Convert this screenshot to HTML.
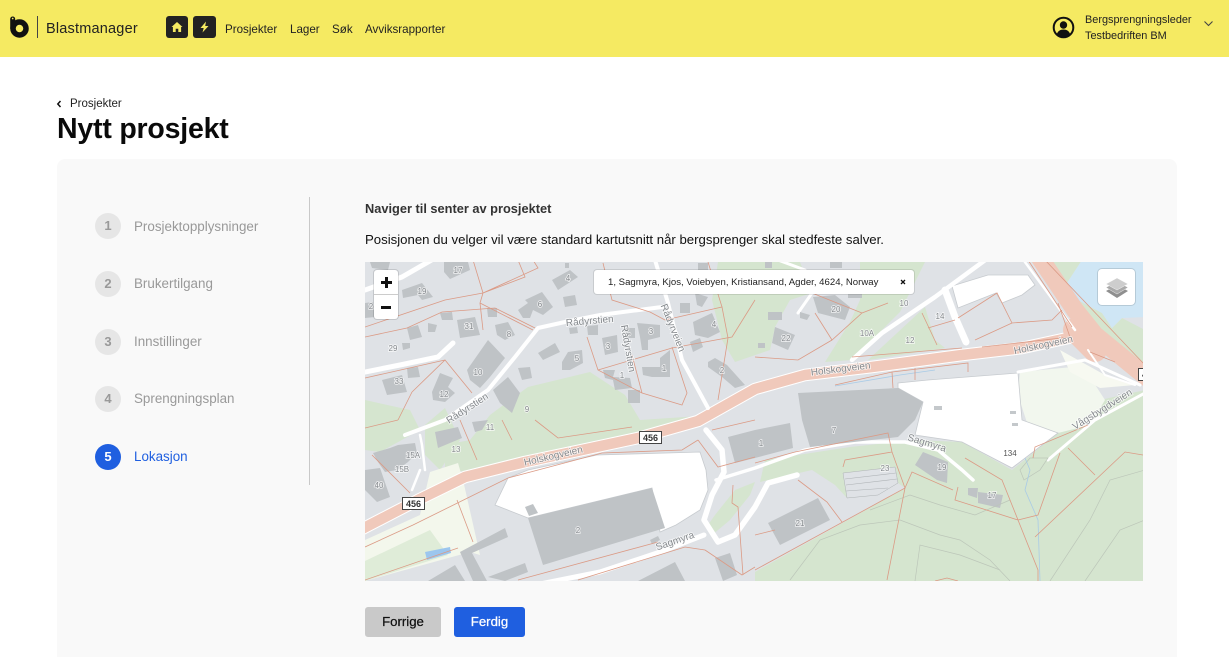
<!DOCTYPE html>
<html lang="no"><head><meta charset="utf-8"><title>Nytt prosjekt</title>
<style>
*{box-sizing:border-box}
html{margin:0;padding:0;width:1229px;height:657px;overflow:hidden;background:#fff}
body{margin:0;padding:0;width:1229px;height:657px;overflow:hidden;position:relative;background:#fff;font-family:"Liberation Sans",sans-serif;color:#111}
.abs{position:absolute;white-space:nowrap}
header{position:absolute;left:0;top:0;width:1229px;height:57px;background:#f5ea62}
.sq{position:absolute;top:16px;width:22px;height:22px;border-radius:3px;background:#222}
.nav{font-size:11.6px;top:23px;color:#222}
.card{position:absolute;left:57px;top:159px;width:1120px;height:520px;background:#f9f9f9;border-radius:8px}
.c{position:absolute;left:95px;width:26px;height:26px;border-radius:50%;background:#e6e6e6;color:#999;font-size:13px;font-weight:bold;text-align:center;line-height:26px}
.l{position:absolute;left:134px;font-size:13.4px;color:#999;white-space:nowrap}
.btn{position:absolute;top:607px;height:30px;border-radius:3px;font-size:13.2px;text-align:center;line-height:30px;-webkit-text-stroke:.25px currentColor}
svg text{font-family:"Liberation Sans",sans-serif;font-size:8px;fill:#85898d;stroke:#fff;stroke-width:1.6px;paint-order:stroke;stroke-opacity:.75;text-anchor:middle}
</style></head><body>
<header>
<svg class="abs" style="left:8px;top:14px" width="24" height="26" viewBox="0 0 24 26"><circle cx="11.500" cy="14.500" r="6.500" fill="none" stroke="#111" stroke-width="5.500"/><path d="M4.700 5V14" stroke="#111" stroke-width="5" stroke-linecap="round"/><circle cx="4.700" cy="4.500" r=".9" fill="#f5ea62"/></svg>
<div class="abs" style="left:37px;top:16px;width:1px;height:22px;background:#444"></div>
<div class="abs" style="left:46px;top:21px;font-size:14.500px;color:#222;letter-spacing:.2px">Blastmanager</div>
<div class="sq" style="left:166px"><svg width="22" height="22" viewBox="0 0 22 22"><path d="M5.500 11 11 6l5.500 5h-1.400v5h-2.800v-3.200H9.700V16H6.900v-5z" fill="#f5ea62"/></svg></div>
<div class="sq" style="left:193px;width:23px"><svg width="23" height="22" viewBox="0 0 23 22"><path d="M13 5.500 7.500 12h3.200L9.500 16.500 15.500 10h-3.300z" fill="#f5ea62"/></svg></div>
<div class="abs nav" style="left:225px">Prosjekter</div>
<div class="abs nav" style="left:290px">Lager</div>
<div class="abs nav" style="left:332px">Søk</div>
<div class="abs nav" style="left:365px">Avviksrapporter</div>
<svg class="abs" style="left:1052px;top:16px" width="23" height="23" viewBox="0 0 23 23"><circle cx="11.500" cy="11.500" r="9.800" fill="none" stroke="#111" stroke-width="2"/><circle cx="11.500" cy="9" r="3.700" fill="#111"/><path d="M4.800 18c1.200-3 3.500-4.500 6.700-4.500s5.500 1.500 6.700 4.500c-1.800 1.800-4.200 2.800-6.700 2.800s-4.900-1-6.700-2.800z" fill="#111"/></svg>
<div class="abs" style="left:1085px;top:14px;font-size:10.900px;color:#222">Bergsprengningsleder</div>
<div class="abs" style="left:1085px;top:30px;font-size:10.900px;color:#222">Testbedriften BM</div>
<svg class="abs" style="left:1203px;top:20px" width="11" height="8" viewBox="0 0 11 8"><path d="M1.500 1.500 5.500 5.500 9.500 1.500" fill="none" stroke="#444" stroke-width="1.100"/></svg>
</header>
<svg class="abs" style="left:56px;top:100px" width="7" height="8" viewBox="0 0 7 8"><path d="M4.500 1 1.800 4 4.500 7" fill="none" stroke="#111" stroke-width="1.500"/></svg>
<div class="abs" style="left:70px;top:98px;font-size:11.500px;color:#222">Prosjekter</div>
<div class="abs" style="left:57px;top:113px;font-size:28.500px;font-weight:bold;color:#0a0a0a;letter-spacing:-.2px">Nytt prosjekt</div>
<div class="card"></div>
<div class="abs" style="left:309px;top:197px;width:1px;height:288px;background:#c9c9c9"></div>
<div class="c" style="top:213px">1</div><div class="l" style="top:219px">Prosjektopplysninger</div>
<div class="c" style="top:271px">2</div><div class="l" style="top:276px">Brukertilgang</div>
<div class="c" style="top:329px">3</div><div class="l" style="top:334px">Innstillinger</div>
<div class="c" style="top:386px">4</div><div class="l" style="top:391px">Sprengningsplan</div>
<div class="c" style="top:444px;background:#1f5fe0;color:#fff">5</div><div class="l" style="top:449px;color:#1f5fe0">Lokasjon</div>
<div class="abs" style="left:365px;top:201px;font-size:12.800px;font-weight:bold;color:#333">Naviger til senter av prosjektet</div>
<div class="abs" style="left:365px;top:232px;font-size:13.200px;color:#111">Posisjonen du velger vil være standard kartutsnitt når bergsprenger skal stedfeste salver.</div>

<svg class="abs" style="left:365px;top:262px;filter:blur(.35px)" width="778" height="319" viewBox="365 262 778 319">
<rect x="365" y="262" width="778" height="319" fill="#dfe2e6"/>
<g fill="#d5e5cf">
<path d="M718 262H800L812 293 790 300 775 327 770 350 735 362 722 340 712 300z"/>
<path d="M860 262H925L900 312 880 332 852 360 825 362 850 322 860 300z"/>
<path d="M868 360 925 307 935 340 945 348z"/>
<path d="M1045 260H1082L1067 283 1072 297 1102 313 1112 328 1122 318 1145 330V368L1100 333z"/>
<path d="M528 387 590 372 625 395 640 420 700 416 640 434 525 458 470 473 445 468 445 445 470 440 490 415 510 400z"/>
<path d="M365 400 410 410 420 430 380 452 365 450z"/>
<path d="M425 425 445 408 460 440 440 470 425 455z"/>
<path d="M755 581V572L905 488 898 483 878 495 847 498 835 485 812 470 760 482 765 460 850 447 915 440 962 442 1012 470 1058 433 1100 400 1145 390V581z"/>
<path d="M715 515 735 490 755 482 750 495 730 520 712 535 708 525z"/>
</g>
<path d="M1082 260H1145V317L1122 318 1112 328 1102 313 1072 297 1067 283z" fill="#cfe6f5"/>
<path d="M430 472 458 463 463 480 480 555 470 552 365 581V540L420 515z" fill="#f3f7ec"/>
<path d="M365 561 430 530 448 555 365 581z" fill="#dfecd8"/>
<path d="M425 552 450 547 451 553 427 560z" fill="#9cc6ee"/>
<path d="M1020 372 1083 366 1105 400 1090 425 1058 433 1030 432 1018 395z" fill="#f2f7ee"/>
<path d="M1060 350 1105 375 1135 385 1100 388 1070 372z" fill="#f7f9f1"/>
<g fill="#fff" stroke="#c7cbcf" stroke-width=".8">
<path d="M508 478 528 470 597 455 700 452 706 470 708 490 700 510 676 525 660 532 652 488 528 518 495 505z"/>
<path d="M898 383 928 380 1018 373 1022 420 1058 433 1012 468 962 442 915 435 923 402 898 388z"/>
<path d="M952 286 988 275 1028 275 1035 285 1022 295 1002 303 996 293 958 308z"/>
</g>
<path d="M700 420 708 408 760 392 795 378 1018 372 1016 354 872 368 805 377z" fill="#dfe2e6"/>
<g fill="none" stroke-linecap="round" stroke-linejoin="round">
<path d="M360 530 418 500 465 477 525 462 582 450 638 438 698 421 755 389 805 375 872 367 962 355 1022 348 1082 335" stroke="#fff" stroke-width="12.500"/>
<path d="M1040 258 1075 310 1095 335 1150 380" stroke="#f0c9bb" stroke-width="18"/>
<path d="M360 530 418 500 465 477 525 462 582 450 638 438 698 421 755 389 805 375 872 367 962 355 1022 348 1082 335" stroke="#f0c9bb" stroke-width="10.500"/>
<path d="M1075 330 1095 350" stroke="#f0c9bb" stroke-width="24"/>
<g stroke="#fff">
<path d="M662 307 600 315 565 322 538 328 515 357 488 390 445 420 405 435" stroke-width="4"/>
<path d="M453 343 438 357 400 365 365 372" stroke-width="5"/>
<path d="M365 290 402 277 435 258" stroke-width="5"/>
<path d="M655 260 668 303 682 360 708 408" stroke-width="4"/>
<path d="M706 430 722 450 724 472 712 495 704 520 718 542 735 535 755 507 768 483 797 475" stroke-width="5.500"/>
<path d="M535 585 600 572 660 552 704 535" stroke-width="5"/>
<path d="M716 480 755 468 805 450 855 442 905 442 938 450 962 470 973 480" stroke-width="3.500"/>
<path d="M852 360 882 333 935 297 988 258" stroke-width="4.500"/>
<path d="M945 290 955 317 966 342" stroke-width="7"/>
<path d="M1022 258 1075 330" stroke-width="2.500"/>
<path d="M798 313 812 293" stroke-width="3"/>
<path d="M778 260 805 270" stroke-width="3"/>
<path d="M1145 393 1095 420 1048 460" stroke-width="3"/>
<path d="M1018 372 1085 360 1140 385" stroke-width="3"/>
<path d="M1088 350 1105 375 1135 385" stroke-width="2"/>
<path d="M425 470 422 445 420 435M420 470 412 490" stroke-width="2.500"/>
</g>
</g>
<g fill="#bfc3c6">
<path d="M444 262H468L470 270 450 279 444 272zM402 290 422 283 433 297 422 300 418 295 403 298zM370 262H390L388 270 372 268zM365 303 373 302 375 317 365 318zM552 280 570 270 578 277 558 290zM565 263H569V268H565zM518 310 528 303 525 300 542 292 553 307 543 315 533 310 530 318 523 318zM563 297 575 295 577 305 565 307zM457 320 475 317 480 335 460 338zM440 313 452 312 453 320 442 320zM407 328 418 325 422 337 410 340zM428 323 437 325 435 332 428 332zM495 325 508 322 515 335 505 340 497 335zM487 308H497V317H488zM402 343H410V348L403 350zM382 380 402 375 407 392 387 395zM407 368 418 367 420 377 408 378zM467 370 488 340 505 358 490 377 480 388 470 380zM432 392 440 373 453 378 448 387 455 393 445 402 433 400zM493 390 508 377 520 393 512 413 500 403zM518 368 530 367 532 378 522 380zM562 362 568 352 582 350 583 363 570 370 562 370zM538 353 555 343 560 352 543 360zM602 338 617 335 618 352 605 355zM637 323 660 325V337L648 340V350H642L640 337zM625 328H635V338H625zM587 326 598 325V335H588zM569 328 577 327 578 333 570 334zM603 370H615L613 377 630 378 632 388 615 390 613 380 605 378zM642 367H660V358L670 350V377H652L643 375zM628 390H640V403H628zM693 322 712 313 720 332 708 338 695 335zM680 303H690V313H680zM690 342 700 338 703 347 693 352zM695 293 708 297 702 307 697 305zM708 362 715 358 727 365 745 385 735 388 722 377 708 367zM698 263H708V270H698z"/>
<path d="M813 297 835 295 850 307 845 320 818 313zM775 327 795 335 788 350 772 343zM768 312H782V320H768zM800 312 810 315 807 320 800 318zM848 293H862V298H848zM758 343H765V348H758zM765 262H772V268H765zM830 262H842V268H830z"/>
<path d="M435 432 458 427 462 438 438 448zM472 422 488 420 482 430 475 432zM373 453 390 448 398 445 415 443 417 453 408 462 397 470 385 472 378 462zM365 470 380 468 390 497 377 502 365 490zM528 518 652 488 665 528 543 565zM525 507 533 504 538 513 529 516zM460 552 505 528 508 537 472 553 487 581H473zM488 577 525 563 528 572 505 581zM428 581 455 565 465 581zM638 581 675 562 685 581zM715 558 730 553 737 575 723 581zM728 437 755 430 790 423 793 448 755 458 735 463zM798 393 898 388 923 402 915 420 898 437 810 447 802 420zM768 523 818 498 830 520 780 545zM915 465 923 452 948 462 947 483 937 480zM978 492 1003 495 1000 508 978 503zM968 488H978L977 498 968 495zM612 535 625 531 628 537 615 542zM650 540 658 536 660 540 652 544z"/>
</g>
<path d="M843 473 895 467 898 483 878 495 847 498z" fill="#dfe2e6" stroke="#aeb2b5" stroke-width=".5"/>
<path d="M845 479 896 473M846 485 897 479M846 491 888 488" stroke="#aeb2b5" stroke-width=".6" fill="none"/>
<path d="M1010 411H1016V414H1010zM934 406H942V410H934zM1012 423H1018V426H1012z" fill="#c4c8cb"/>
<g fill="none" stroke="#bcc6b9" stroke-width=".7">
<path d="M790 580 820 540 860 525 900 520 940 535 960 540 990 560 1010 581"/>
<path d="M915 581 920 545 960 555 1000 570"/>
<path d="M1050 581 1090 520 1110 480 1145 470"/>
<path d="M1085 581 1120 530 1145 520"/>
<path d="M1020 470 1030 458 1048 458 1040 470 1024 480z"/>
<path d="M870 510 910 495 940 505 975 515 1010 500"/>
</g>
<path d="M1025 458 1030 470 1025 490 1038 520 1040 581" fill="none" stroke="#a9cbe6" stroke-width=".8"/>
<path d="M835 386 900 375 935 370" fill="none" stroke="#a9cbe6" stroke-width=".8"/>
<g fill="none" stroke="#db9a85" stroke-width=".8">
<path d="M365 327 445 300 483 293 538 268 533 260M483 293 473 260M483 293 480 303 483 330M480 303 533 330M365 337 407 328 442 312 495 308 535 328M412 392 445 360 472 393M365 378 445 360M398 420 412 392M518 260 525 277 483 293"/>
<path d="M587 337 598 370 642 393 682 405 687 393 672 347M598 370 672 348 732 337 755 300M632 355 642 393M665 320 722 307 728 338 718 400M722 307 708 262M603 263 612 300 650 312 665 320"/>
<path d="M755 357 798 360 832 340 862 313 888 303M812 293 862 313M832 340 815 313M852 357 962 348M922 313 937 345M928 328 955 320M958 318 997 293 1012 323 1052 320 1062 310M975 340 1012 323M982 347 1070 337 1058 303"/>
<path d="M835 385 892 372 968 363 968 372M892 372 893 388M915 368 915 380"/>
<path d="M1045 260 1145 365M1028 260 1072 327M1090 352 1115 362"/>
<path d="M365 547 413 525 508 478 602 453 682 450 698 440M457 500 473 542M365 580 458 548M518 580 658 542M372 455 410 493M365 428 398 420M460 420 477 460M502 420 512 440M535 420 558 438 632 427M712 430 755 420M698 440 718 467 755 457M733 485 732 503 738 507 743 575M705 550 742 575 755 567M578 580 685 547 705 550"/>
<path d="M755 535 775 530M755 570 905 488 887 580M905 488 912 472 953 490M892 452 845 460 843 467M892 452 905 488M798 480 827 502 842 522M755 463 795 452 888 433 892 452M965 458 1002 480 1018 520 955 500 958 487M1018 520 1038 515 1060 453M1035 537 1125 452 1143 455M1095 475 1068 448M1018 520 1038 570 1038 581M1033 458 1035 447 1088 425M935 581 947 578 958 581"/>
</g>
<text x="590" y="324" style="font-size:10px" transform="rotate(-5 590 324)">Rådyrstien</text>
<text x="625" y="349" style="font-size:10px" transform="rotate(80 625 349)">Rådyrstien</text>
<text x="670" y="329" style="font-size:10px" transform="rotate(68 670 329)">Rådyrveien</text>
<text x="469" y="411" style="font-size:10px" transform="rotate(-33 469 411)">Rådyrstien</text>
<text x="841" y="372" style="font-size:10px" transform="rotate(-7 841 372)">Holskogveien</text>
<text x="1044" y="348" style="font-size:10px" transform="rotate(-12 1044 348)">Holskogveien</text>
<text x="554" y="459" style="font-size:10px" transform="rotate(-13 554 459)">Holskogveien</text>
<text x="676" y="544" style="font-size:10px" transform="rotate(-19 676 544)">Sagmyra</text>
<text x="926" y="446" style="font-size:10px" transform="rotate(17 926 446)">Sagmyra</text>
<text x="1104" y="412" style="font-size:10px" transform="rotate(-32 1104 412)">Vågsbygdveien</text>
<g>
<text x="458" y="273">17</text><text x="422" y="294">19</text><text x="371" y="309">2</text><text x="568" y="281">4</text><text x="540" y="307">6</text><text x="469" y="329">31</text><text x="509" y="337">8</text><text x="393" y="351">29</text><text x="399" y="384">33</text><text x="478" y="375">10</text><text x="444" y="397">12</text><text x="577" y="361">5</text><text x="608" y="349">3</text><text x="651" y="334">3</text><text x="622" y="378">1</text><text x="664" y="371">1</text><text x="714" y="327">4</text><text x="722" y="373">2</text><text x="527" y="412">9</text>
<text x="836" y="312">20</text><text x="786" y="341">22</text><text x="904" y="306">10</text><text x="867" y="336">10A</text><text x="910" y="343">12</text><text x="940" y="319">14</text>
<text x="490" y="430">11</text><text x="456" y="452">13</text><text x="413" y="458">15A</text><text x="402" y="472">15B</text><text x="379" y="488">40</text><text x="578" y="533">2</text><text x="761" y="446">1</text><text x="834" y="433">7</text><text x="1010" y="456" style="fill:#555">134</text><text x="885" y="471">23</text><text x="942" y="470">19</text><text x="992" y="498">17</text><text x="800" y="526">21</text>
</g>
<g>
<rect x="639.500" y="431.500" width="22" height="12" fill="#fff" stroke="#444" stroke-width="1"/>
<text x="650.500" y="441" style="font-size:9px;font-weight:bold;fill:#333;stroke:none">456</text>
<rect x="402.500" y="497.500" width="22" height="12" fill="#fff" stroke="#444" stroke-width="1"/>
<text x="413.500" y="507" style="font-size:9px;font-weight:bold;fill:#333;stroke:none">456</text>
<rect x="1138.500" y="368.500" width="22" height="12" fill="#fff" stroke="#444" stroke-width="1"/>
<text x="1149.500" y="378" style="font-size:9px;font-weight:bold;fill:#333;stroke:none">456</text>
</g>
</svg>

<div class="abs" style="left:374px;top:270px;width:24px;height:49px;background:#fff;border-radius:3px;box-shadow:0 0 0 1px rgba(0,0,0,.12)"></div>
<div class="abs" style="left:374px;top:294px;width:24px;height:1px;background:#ccc"></div>
<div class="abs" style="left:381px;top:281px;width:11px;height:2.500px;background:#111"></div>
<div class="abs" style="left:385.300px;top:276.500px;width:2.500px;height:11px;background:#111"></div>
<div class="abs" style="left:381px;top:306px;width:10px;height:2.500px;background:#111"></div>
<div class="abs" style="left:594px;top:270px;width:320px;height:24px;background:#fff;border-radius:3px;box-shadow:0 0 0 1px rgba(0,0,0,.1)"></div>
<div class="abs" style="left:608px;top:277px;font-size:9.600px;color:#222">1, Sagmyra, Kjos, Voiebyen, Kristiansand, Agder, 4624, Norway</div>
<svg class="abs" style="left:900px;top:279px" width="6" height="6" viewBox="0 0 6 6"><path d="M1 1 5 5M5 1 1 5" stroke="#111" stroke-width="1.300"/></svg>
<div class="abs" style="left:1098px;top:269px;width:37px;height:36px;background:#fff;border-radius:4px;box-shadow:0 0 0 1px rgba(0,0,0,.12)"></div>
<svg class="abs" style="left:1105px;top:276px" width="24" height="24" viewBox="0 0 24 24"><path d="M1 15 12 9 23 15 12 22z" fill="#8f8f8f"/><path d="M1 11.500 12 5.500 23 11.500 12 18z" fill="#a9a9a9" stroke="#fff" stroke-width=".4"/><path d="M1 8 12 2 23 8 12 14z" fill="#cdcdcd" stroke="#fff" stroke-width=".4"/></svg>

<div class="btn" style="left:365px;width:76px;background:#c9c9c9;color:#111">Forrige</div>
<div class="btn" style="left:454px;width:71px;background:#1f5fe0;color:#fff">Ferdig</div>
</body></html>
